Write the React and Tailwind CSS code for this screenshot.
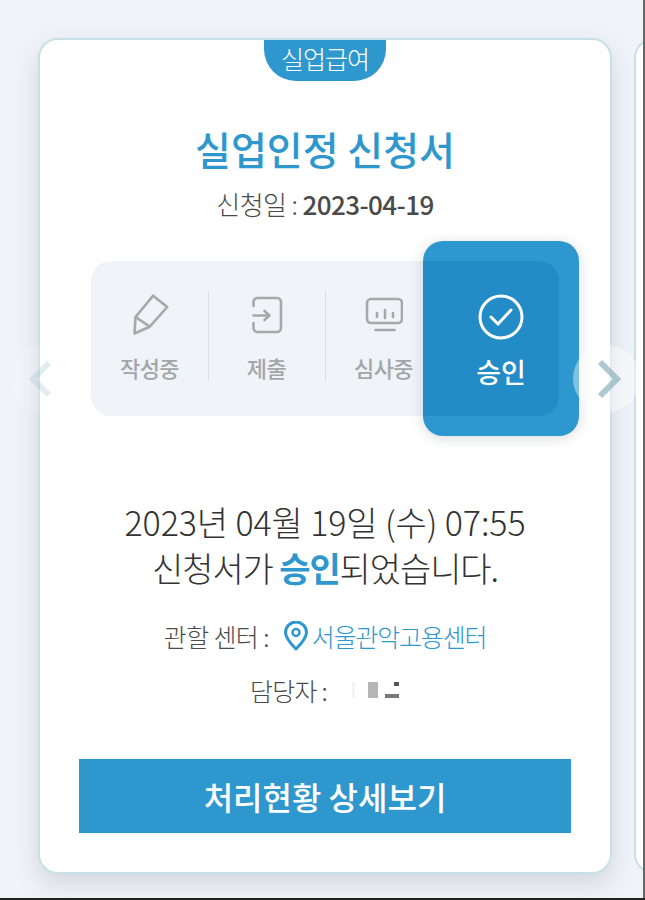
const font = { fontFamily: '"Noto Sans CJK KR", "Noto Sans", sans-serif' };

function Arrow({ side }) {
  const left = side === 'left';
  return (
    <div className={`absolute top-[345px] flex h-[67px] w-[67px] items-center justify-center rounded-full ${left ? 'left-[8px] bg-white/15' : 'left-[573px] bg-white/40'}`}>
      <svg width="30" height="40" viewBox="0 0 30 40" fill="none" className={left ? 'opacity-25' : 'opacity-70'}>
        <path d={left ? 'M22 4L6 20l16 16' : 'M8 3l17 17L8 37'} stroke={left ? '#8fbcc4' : '#8fb1c0'} strokeWidth="6" />
      </svg>
    </div>
  );
}

function Step({ icon, label, divider }) {
  return (
    <div className="relative flex w-[117px] shrink-0 flex-col items-center pt-[33px]">
      {icon}
      <span className="mt-[16px] text-[22px] leading-[30px] font-medium tracking-[-0.6px] text-[#a3a6a8]">{label}</span>
      {divider && <div className="absolute top-[30px] right-[-1px] h-[90px] w-px bg-[#dcdfe2]" />}
    </div>
  );
}

export default function App() {
  return (
    <div style={font} className="relative h-[900px] w-[645px] overflow-hidden bg-[#f0f3f8]">
      <div className="flex gap-[22px] pt-[38px] pl-[38px]">
        <div className="relative flex h-[836px] w-[574px] shrink-0 flex-col items-center rounded-[20px] border-2 border-[#c9dfe6] bg-white shadow-[0_10px_24px_rgba(60,70,80,0.16)]">
          <div className="flex h-[41px] w-[122px] items-center justify-center rounded-b-[32px] bg-[#2e98ce] pb-[5px] text-[25px] leading-none font-light tracking-[-1px] text-white">실업급여</div>
          <h1 className="mt-[39px] text-[39px] leading-[56px] font-medium text-[#2e98ce]">실업인정 신청서</h1>
          <p className="mt-[10px] text-[26px] leading-[36px] font-light tracking-[-0.6px] text-[#4a4a4a]">
            신청일 : <span className="font-medium">2023-04-19</span>
          </p>
          <div className="mt-[39px] ml-[51px] flex h-[155px] w-[468px] self-start rounded-[20px] bg-[#f0f3f8]">
            <Step
              label="작성중"
              divider
              icon={
                <svg width="38" height="42" viewBox="0 0 38 42" fill="none" stroke="#a6a8aa" strokeWidth="2.600" strokeLinejoin="round">
                  <path d="M22.200 1.700L36.200 13 18.800 32.700 3.500 39.500 4.500 23z" />
                  <path d="M4.500 23l14.300 9.700" />
                </svg>
              }
            />
            <Step
              label="제출"
              divider
              icon={
                <svg width="38" height="42" viewBox="0 0 38 42" fill="none" stroke="#a6a8aa" strokeWidth="2.600" strokeLinecap="round" strokeLinejoin="round">
                  <path d="M5.500 12V8a4 4 0 0 1 4-4H29a4 4 0 0 1 4 4v26a4 4 0 0 1-4 4H9.500a4 4 0 0 1-4-4v-5" />
                  <path d="M5.500 21.500H21M16.500 17l5 4.500-5 4.500" />
                </svg>
              }
            />
            <Step
              label="심사중"
              icon={
                <svg width="38" height="42" viewBox="0 0 38 42" fill="none" stroke="#a6a8aa" strokeWidth="2.600" strokeLinecap="round" strokeLinejoin="round">
                  <rect x="2" y="5" width="35" height="24" rx="4" />
                  <path d="M12 19v4M20 16v8M28 19v4M10.500 36h19" />
                </svg>
              }
            />
          </div>
          <div className="mt-[83px] text-center text-[34px] leading-[46px] font-light text-[#333]">
            <p className="tracking-[-0.1px]">2023년 04월 19일 (수) 07:55</p>
            <p className="tracking-[-1.1px]">신청서가 <span className="font-bold text-[#2e98ce]">승인</span>되었습니다.</p>
          </div>
          <div className="mt-[27px] flex items-center text-[25px] leading-[36px] font-light tracking-[-0.6px] text-[#4a4a4a]">
            <span>관할 센터 :</span>
            <svg width="26" height="30" viewBox="0 0 26 30" fill="none" className="mr-[3px] ml-[14px]">
              <path d="M13 28C7 22 2.500 17 2.500 11.500a10.500 10.500 0 0 1 21 0C23.500 17 19 22 13 28z" stroke="#2e98ce" strokeWidth="3" strokeLinejoin="round" />
              <circle cx="13" cy="11.500" r="3.500" stroke="#2e98ce" strokeWidth="2.500" />
            </svg>
            <span className="tracking-[-1.2px] text-[#2e98ce]">서울관악고용센터</span>
          </div>
          <div className="mt-[18px] flex items-center text-[25px] leading-[36px] font-light tracking-[-0.8px] text-[#4a4a4a]">
            <span>담당자 :</span>
            <div className="ml-[25px] flex h-[16px] w-[48px] items-center">
              <div className="h-[16px] w-[3px] bg-[#f3f3f3]" />
              <div className="ml-[13px] h-[16px] w-[10px] bg-[#b5b5b5]" />
              <div className="relative ml-[7px] h-[16px] w-[14px]">
                <div className="absolute top-0 right-0 h-[4px] w-[5px] bg-[#555]" />
                <div className="absolute bottom-0 left-0 h-[4px] w-[14px] bg-[#777]" />
              </div>
            </div>
          </div>
          <button className="mt-[51px] h-[74px] w-[492px] bg-[#2e98ce] text-[32px] font-medium text-white">처리현황 상세보기</button>
        </div>
        <div className="h-[836px] w-[573px] shrink-0 rounded-[20px] border-2 border-[#c9dfe6] bg-white" />
      </div>
      <div className="absolute top-[241px] left-[423px] flex h-[195px] w-[156px] flex-col items-center overflow-hidden rounded-[20px] bg-[#2e98ce] pt-[53px] text-white shadow-[0_2px_14px_rgba(60,70,80,0.2)]">
        <div className="absolute top-[20px] left-0 h-[155px] w-[136px] rounded-r-[20px] bg-[#238cc7]" />
        <svg width="46" height="46" viewBox="0 0 46 46" fill="none" className="relative" stroke="white" strokeWidth="3" strokeLinecap="round" strokeLinejoin="round">
          <circle cx="23" cy="23" r="21" />
          <path d="M13 23l7 7 13-14" />
        </svg>
        <span className="relative mt-[12px] text-[27px] leading-[40px] font-medium">승인</span>
      </div>
      <Arrow side="left" />
      <Arrow side="right" />
      <div className="absolute top-0 right-0 h-full w-[2px] bg-[#666]" />
      <div className="absolute bottom-0 left-0 h-[2px] w-full bg-[#222]" />
    </div>
  );
}
